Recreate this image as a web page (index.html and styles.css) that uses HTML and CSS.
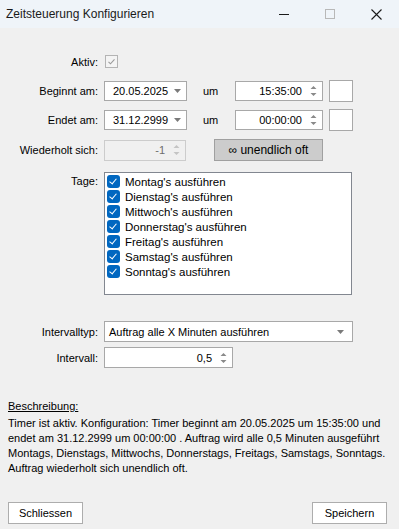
FILE: index.html
```html
<!DOCTYPE html>
<html lang="de">
<head>
    <meta charset="UTF-8">
    <meta name="viewport" content="width=device-width, initial-scale=1.0">
    <title>Zeitsteuerung Konfigurieren</title>
    <link rel="stylesheet" href="styles.css">
</head>
<body>
    <!-- Fenstertitel -->
    <div class="titlebar">
        <span class="title">Zeitsteuerung Konfigurieren</span>
        <div class="caption">
            <span class="cap-btn"><svg width="10" height="10" viewBox="0 0 10 10"><path d="M0 5.5h10" stroke="#1a1a1a" stroke-width="1"/></svg></span>
            <span class="cap-btn"><svg width="10" height="10" viewBox="0 0 10 10"><rect x="0.5" y="0.5" width="9" height="9" fill="none" stroke="#b8b8b8"/></svg></span>
            <span class="cap-btn"><svg width="11" height="11" viewBox="0 0 11 11"><path d="M0.5 0.5l10 10M10.5 0.5l-10 10" stroke="#1a1a1a" stroke-width="1.1"/></svg></span>
        </div>
    </div>

    <div class="form">
        <div class="row row-aktiv">
            <label class="label">Aktiv:</label>
            <span class="check-disabled"><svg width="11" height="11" viewBox="0 0 11 11"><path d="M2.5 5.8l2 2 4-4.5" fill="none" stroke="#9a9a9a" stroke-width="1.1"/></svg></span>
        </div>

        <div class="row row-date">
            <label class="label">Beginnt am:</label>
            <div class="combo date">
                <span class="value">20.05.2025</span>
                <svg class="drop" width="7" height="4" viewBox="0 0 7 4"><path d="M0 0h7L3.5 4z" fill="#7a7a7a"/></svg>
            </div>
            <span class="um">um</span>
            <div class="spin time">
                <span class="value">15:35:00</span>
                <svg class="arrows" width="7" height="14" viewBox="0 0 7 14"><path d="M0.5 5L3.5 2 6.5 5z M0.5 9L3.5 12 6.5 9z" fill="#8a8a8a"/></svg>
            </div>
            <span class="square"></span>
        </div>

        <div class="row row-date2">
            <label class="label">Endet am:</label>
            <div class="combo date">
                <span class="value">31.12.2999</span>
                <svg class="drop" width="7" height="4" viewBox="0 0 7 4"><path d="M0 0h7L3.5 4z" fill="#7a7a7a"/></svg>
            </div>
            <span class="um">um</span>
            <div class="spin time">
                <span class="value">00:00:00</span>
                <svg class="arrows" width="7" height="14" viewBox="0 0 7 14"><path d="M0.5 5L3.5 2 6.5 5z M0.5 9L3.5 12 6.5 9z" fill="#8a8a8a"/></svg>
            </div>
            <span class="square"></span>
        </div>

        <div class="row row-repeat">
            <label class="label">Wiederholt sich:</label>
            <div class="spin repeat disabled">
                <span class="value">-1</span>
                <svg class="arrows" width="7" height="14" viewBox="0 0 7 14"><path d="M0.5 5L3.5 2 6.5 5z M0.5 9L3.5 12 6.5 9z" fill="#c4c4c4"/></svg>
            </div>
            <button class="btn infinite">∞ unendlich oft</button>
        </div>

        <div class="row row-days">
            <label class="label label-top">Tage:</label>
            <div class="listbox">
                <div class="item"><span class="box"></span>Montag's ausführen</div>
                <div class="item"><span class="box"></span>Dienstag's ausführen</div>
                <div class="item"><span class="box"></span>Mittwoch's ausführen</div>
                <div class="item"><span class="box"></span>Donnerstag's ausführen</div>
                <div class="item"><span class="box"></span>Freitag's ausführen</div>
                <div class="item"><span class="box"></span>Samstag's ausführen</div>
                <div class="item"><span class="box"></span>Sonntag's ausführen</div>
            </div>
        </div>

        <div class="row row-type">
            <label class="label">Intervalltyp:</label>
            <div class="combo type">
                <span class="value">Auftrag alle X Minuten ausführen</span>
                <svg class="drop" width="7" height="4" viewBox="0 0 7 4"><path d="M0 0h7L3.5 4z" fill="#7a7a7a"/></svg>
            </div>
        </div>

        <div class="row row-interval">
            <label class="label">Intervall:</label>
            <div class="spin interval">
                <span class="value">0,5</span>
                <svg class="arrows" width="7" height="14" viewBox="0 0 7 14"><path d="M0.5 5L3.5 2 6.5 5z M0.5 9L3.5 12 6.5 9z" fill="#8a8a8a"/></svg>
            </div>
        </div>

        <!-- Beschreibung -->
        <div class="desc">
            <div class="desc-title">Beschreibung:</div>
            <p class="desc-text">Timer ist aktiv. Konfiguration: Timer beginnt am 20.05.2025 um 15:35:00 und endet am 31.12.2999 um 00:00:00 . Auftrag wird alle 0,5 Minuten ausgeführt Montags, Dienstags, Mittwochs, Donnerstags, Freitags, Samstags, Sonntags. Auftrag wiederholt sich unendlich oft.</p>
        </div>

        <div class="footer">
            <button class="btn action">Schliessen</button>
            <button class="btn action">Speichern</button>
        </div>
    </div>
</body>
</html>
```

FILE: styles.css
```css
/* Algemene stijlen */
* {
    box-sizing: border-box;
}

body {
    margin: 0;
    width: 399px;
    height: 529px;
    background-color: #f0f0f0;
    font-family: "Liberation Sans", Arial, sans-serif;
    font-size: 11px;
    color: #000;
    overflow: hidden;
}

/* Titelbalk */
.titlebar {
    height: 28px;
    background-color: #eff4f9;
    display: flex;
    align-items: center;
    justify-content: space-between;
}

.title {
    padding-left: 6px;
    font-size: 12px;
    color: #1a1a1a;
}

.caption {
    display: flex;
    height: 100%;
}

.cap-btn {
    width: 46px;
    display: flex;
    align-items: center;
    justify-content: center;
}

/* Formulier */
.row {
    display: flex;
    align-items: center;
}

.label {
    width: 98px;
    text-align: right;
    margin-right: 6px;
    flex-shrink: 0;
}

.row-aktiv {
    height: 21px;
    margin-top: 23px;
}

.row-date {
    height: 22px;
    margin-top: 8px;
}

.row-date2 {
    height: 22px;
    margin-top: 7px;
}

.row-repeat {
    height: 22px;
    margin-top: 8px;
}

.row-days {
    align-items: flex-start;
    margin-top: 11px;
}

.row-type {
    height: 21px;
    margin-top: 26px;
}

.row-interval {
    height: 21px;
    margin-top: 5px;
}

.label-top {
    padding-top: 3px;
}

.check-disabled {
    width: 13px;
    height: 13px;
    margin-left: 1px;
    border: 1px solid #b4b4b4;
    background-color: #f4f4f4;
    display: flex;
    align-items: center;
    justify-content: center;
}

.combo,
.spin {
    height: 20px;
    background-color: #fff;
    border: 1px solid #a8a8a8;
    display: flex;
    align-items: center;
    flex-shrink: 0;
}

.combo .value {
    padding-left: 8px;
    flex: 1;
}

.date {
    width: 83px;
}

.date .drop {
    margin-right: 5px;
}

.um {
    width: 48px;
    padding-left: 16px;
    flex-shrink: 0;
}

.spin .value {
    flex: 1;
    text-align: right;
    padding-right: 8px;
}

.spin .arrows {
    margin-right: 5px;
}

.time {
    width: 88px;
    height: 20px;
}

.square {
    width: 24px;
    height: 22px;
    margin-left: 6px;
    background-color: #fff;
    border: 1px solid #a8a8a8;
    flex-shrink: 0;
}

.repeat {
    width: 82px;
    height: 21px;
}

.disabled {
    background-color: #f0f0f0;
    border-color: #cccccc;
    color: #6d6d6d;
}

.btn {
    font-family: "Liberation Sans", Arial, sans-serif;
    font-size: 11px;
    color: #000;
    border: 1px solid #adadad;
    background-color: #fdfdfd;
    padding: 0;
    height: 22px;
}

.infinite {
    width: 109px;
    margin-left: 28px;
    background-color: #cccccc;
    border-color: #a0a0a0;
    font-size: 12px;
}

/* Lijst met dagen */
.listbox {
    width: 248px;
    height: 123px;
    background-color: #fff;
    border: 1px solid #828790;
    padding: 1px 0 0 2px;
}

.item {
    height: 15px;
    display: flex;
    align-items: center;
    font-size: 11.5px;
}

.box {
    width: 13px;
    height: 13px;
    margin-right: 5px;
    border-radius: 3px;
    background-color: #0067c0;
    position: relative;
}

.box::after {
    content: "";
    position: absolute;
    left: 4px;
    top: 2px;
    width: 3px;
    height: 6px;
    border-right: 1px solid #fff;
    border-bottom: 1px solid #fff;
    transform: rotate(40deg);
}

.type {
    width: 249px;
    height: 21px;
}

.type .value {
    padding-left: 4px;
}

.type .drop {
    margin-right: 8px;
}

.interval {
    width: 129px;
    height: 21px;
}

/* Beschreibung */
.desc {
    margin-top: 31px;
    padding: 0 8px;
}

.desc-title {
    text-decoration: underline;
    line-height: 14px;
}

.desc-text {
    margin: 3px 0 0;
    line-height: 15px;
}

.footer {
    display: flex;
    justify-content: space-between;
    padding: 0 12px 0 8px;
    margin-top: 26px;
}

.action {
    width: 75px;
    height: 22px;
    background-color: #fff;
}
```
